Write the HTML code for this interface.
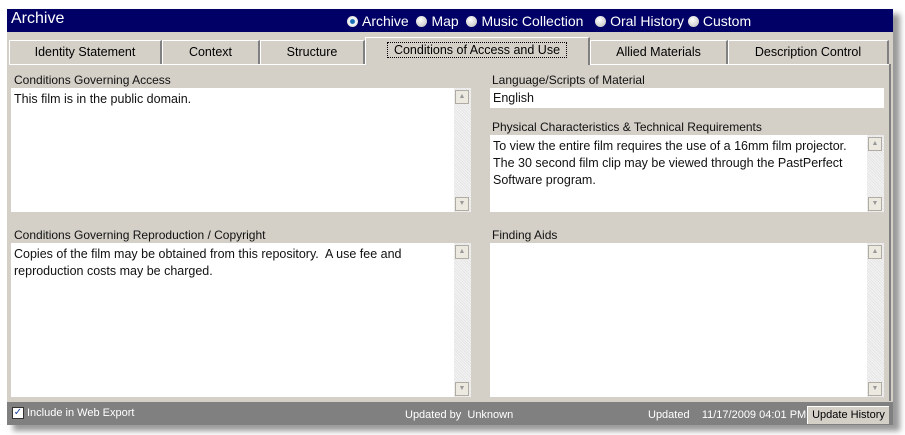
<!DOCTYPE html><html><head><style>
body{margin:0;width:905px;height:435px;background:#fff;position:relative;overflow:hidden;font-family:"Liberation Sans",Arial,sans-serif;font-size:12px;color:#000}
.a{position:absolute}
.box{position:absolute;background:#fff}
.sb{position:absolute;right:0;top:0;bottom:0;width:17px;background:repeating-linear-gradient(45deg,#f4f4f4 0 1px,#e4e4e4 1px 2px)}
.btn{position:absolute;left:1px;width:14px;height:14px;background:#ece9e0;border:1px solid #b0aca4;box-sizing:border-box;font-size:7px;color:#999;text-align:center;line-height:12px}
.tab{position:absolute;top:40px;height:24px;background:#d4d0c8;border-top:1px solid #fff;border-left:1px solid #fff;border-right:2px solid #808080;box-sizing:border-box;text-align:center;line-height:23px;font-size:12.5px}
.lbl{position:absolute;font-size:12px;color:#111}
.t{position:absolute;left:3px;top:3px;font-size:12.5px;line-height:17px;color:#111}
.rad{display:inline-block;width:11px;height:11px;border-radius:50%;background:radial-gradient(circle at 40% 35%,#fff,#bbb);vertical-align:-1px;margin-right:4px}
</style></head><body>
<div class="a" style="left:13px;top:14px;width:887px;height:417px;background:#999;filter:blur(3px)"></div>
<div class="a" style="left:7px;top:9px;width:886px;height:416px;background:#d4d0c8"></div>
<div class="a" style="left:7px;top:9px;width:886px;height:23px;background:#000066;color:#fff">
<span class="a" style="left:4px;top:1px;font-size:16px">Archive</span>
<span class="a" style="left:340px;top:4px;font-size:14px;white-space:nowrap"><span class="rad" style="background:radial-gradient(circle,#1a6fb5 0 2px,#fff 3px,#bbb)"></span>Archive &nbsp;<span class="rad"></span>Map &nbsp;<span class="rad"></span>Music Collection &nbsp;&nbsp;<span class="rad"></span>Oral History <span class="rad"></span>Custom</span>
</div>
<div class="a" style="left:7px;top:32px;width:886px;height:8px;background:#d4d0c8"></div>
<div class="tab" style="left:9px;width:153px">Identity Statement</div>
<div class="tab" style="left:162px;width:98px">Context</div>
<div class="tab" style="left:260px;width:105px">Structure</div>
<div class="tab" style="left:365px;top:37px;height:28px;width:225px;line-height:24px;border-bottom:none"><span style="border:1px dotted #000;padding:0 6px">Conditions of Access and Use</span></div>
<div class="tab" style="left:590px;width:138px">Allied Materials</div>
<div class="tab" style="left:728px;width:161px">Description Control</div>
<div class="a" style="left:9px;top:64px;width:356px;height:1px;background:#fff"></div>
<div class="a" style="left:590px;top:64px;width:299px;height:1px;background:#fff"></div>
<div class="a" style="left:889px;top:64px;width:2px;height:337px;background:#808080"></div>
<div class="lbl" style="left:14px;top:73px">Conditions Governing Access</div>
<div class="box" style="left:11px;top:88px;width:460px;height:124px"><div class="t">This film is in the public domain.</div><div class="sb"><div class="btn" style="top:2px">▲</div><div class="btn" style="bottom:1px">▼</div></div></div>
<div class="lbl" style="left:14px;top:228px">Conditions Governing Reproduction / Copyright</div>
<div class="box" style="left:11px;top:243px;width:460px;height:154px"><div class="t">Copies of the film may be obtained from this repository.&nbsp; A use fee and<br>reproduction costs may be charged.</div><div class="sb"><div class="btn" style="top:2px">▲</div><div class="btn" style="bottom:1px">▼</div></div></div>
<div class="lbl" style="left:492px;top:73px">Language/Scripts of Material</div>
<div class="box" style="left:490px;top:88px;width:394px;height:20px"><div class="t" style="top:2px">English</div></div>
<div class="lbl" style="left:492px;top:120px">Physical Characteristics &amp; Technical Requirements</div>
<div class="box" style="left:490px;top:135px;width:394px;height:77px"><div class="t">To view the entire film requires the use of a 16mm film projector.<br>The 30 second film clip may be viewed through the PastPerfect<br>Software program.</div><div class="sb"><div class="btn" style="top:2px">▲</div><div class="btn" style="bottom:1px">▼</div></div></div>
<div class="lbl" style="left:492px;top:228px">Finding Aids</div>
<div class="box" style="left:490px;top:243px;width:394px;height:154px"><div class="sb"><div class="btn" style="top:2px">▲</div><div class="btn" style="bottom:1px">▼</div></div></div>
<div class="a" style="left:7px;top:402px;width:886px;height:23px;background:#808080;color:#fff;font-size:11px">
<span class="a" style="left:5px;top:5px;width:10px;height:10px;background:#fff;border:1px solid #333;color:#1a3fa0;font-size:10px;line-height:10px;text-align:center">✓</span>
<span class="a" style="left:20px;top:5px">Include in Web Export</span>
<span class="a" style="left:398px;top:7px">Updated by&nbsp; Unknown</span>
<span class="a" style="left:641px;top:7px">Updated&nbsp;&nbsp;&nbsp; 11/17/2009 04:01 PM</span>
<span class="a" style="left:800px;top:4px;width:81px;height:17px;background:#d4d0c8;color:#000;text-align:center;line-height:17px;border-top:1px solid #fff;border-left:1px solid #fff">Update History</span>
</div>
</body></html>
